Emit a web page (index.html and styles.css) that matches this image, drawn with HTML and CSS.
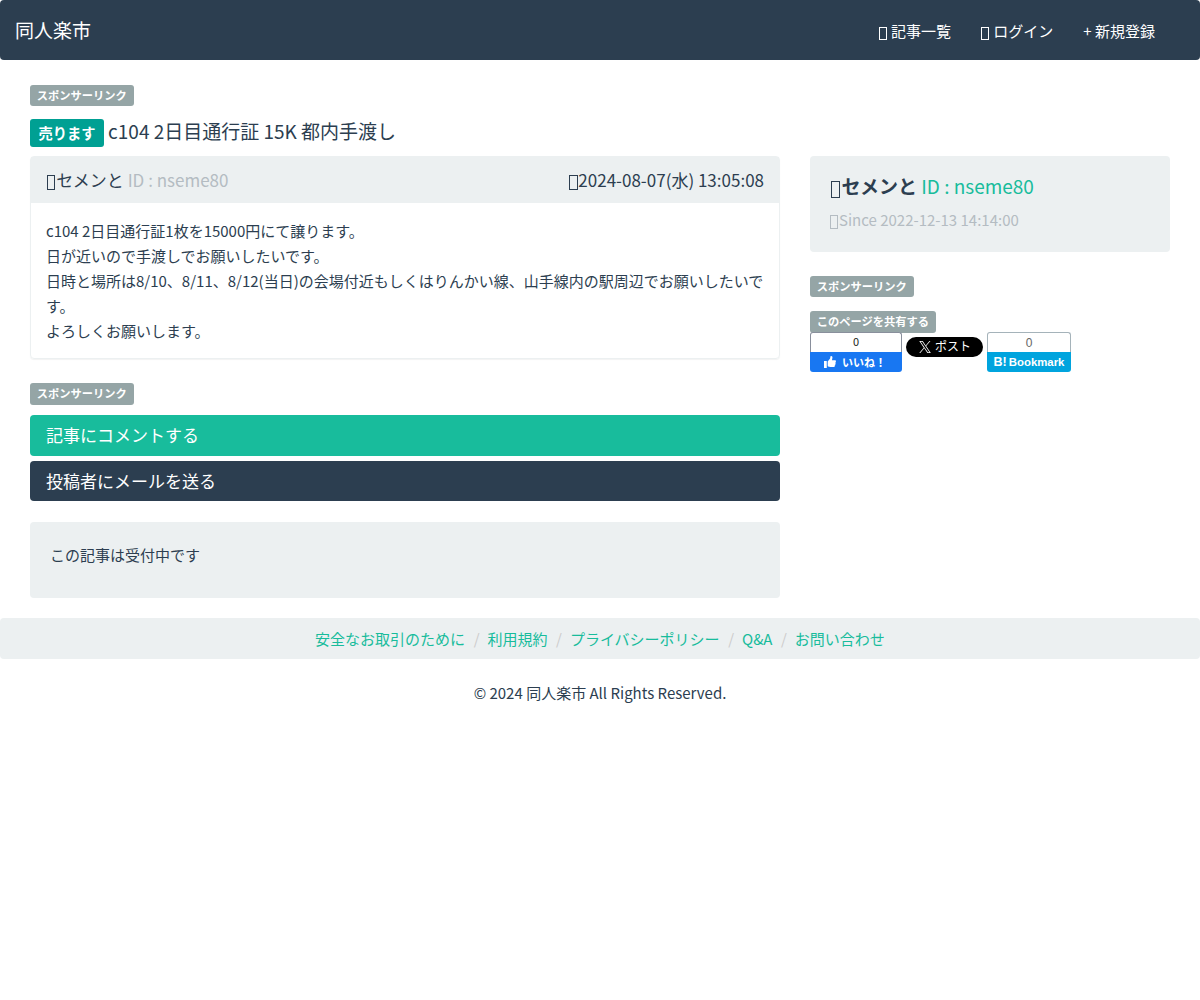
FILE: index.html
```html
<!DOCTYPE html>
<html lang="ja">
<head>
  <meta charset="UTF-8" />
  <meta name="viewport" content="width=device-width, initial-scale=1.0"/>
  <title>c104 2日目通行証 15K 都内手渡し | 同人楽市</title>
  <link rel="stylesheet" href="styles.css">
</head>
<body>
  <nav class="navbar">
    <a class="brand" href="#">同人楽市</a>
    <ul class="nav">
      <li><a href="#"><i class="icon"></i> 記事一覧</a></li>
      <li><a href="#"><i class="icon"></i> ログイン</a></li>
      <li><a href="#">+ 新規登録</a></li>
    </ul>
  </nav>

  <div class="container">
    <div class="sponsor"><span class="label">スポンサーリンク</span></div>
    <h1 class="title"><span class="label label-sell">売ります</span> <span class="title-text">c104 2日目通行証 15K 都内手渡し</span></h1>

    <div class="row">
      <main class="main">
        <div class="panel">
          <div class="panel-heading">
            <span><i class="icon"></i>セメンと <span class="muted">ID : nseme80</span></span>
            <span><i class="icon"></i>2024-08-07(水) 13:05:08</span>
          </div>
          <div class="panel-body">
            c104 2日目通行証1枚を15000円にて譲ります。<br>
            日が近いので手渡しでお願いしたいです。<br>
            日時と場所は8/10、8/11、8/12(当日)の会場付近もしくはりんかい線、山手線内の駅周辺でお願いしたいです。<br>
            よろしくお願いします。
          </div>
        </div>

        <div class="sponsor"><span class="label label-tall">スポンサーリンク</span></div>

        <a class="action action-comment" href="#">記事にコメントする</a>
        <a class="action action-mail" href="#">投稿者にメールを送る</a>

        <div class="well status">この記事は受付中です</div>
      </main>

      <aside class="side">
        <div class="well profile">
          <h2><i class="icon"></i><b>セメンと</b> <a href="#">ID : nseme80</a></h2>
          <p class="muted"><i class="icon"></i>Since 2022-12-13 14:14:00</p>
        </div>
        <div class="sponsor"><span class="label">スポンサーリンク</span></div>
        <div class="sponsor share-label"><span class="label label-tall">このページを共有する</span></div>
        <div class="share">
          <a class="counter like" href="#">
            <span class="count">0</span>
            <span class="counter-btn">
              <svg width="12" height="12" viewBox="0 0 13 13" fill="#fff"><path d="M0 5.5h3V13H0zM4 6l2.6-3.2L7 .6C7.1.1 7.5 0 7.9 0 9 .2 9.3 1.3 9.1 2.3L8.6 4.6h3.2c1.5.1 1.5 1.8.5 2.2.8.6.5 1.7-.2 1.9.5.7.2 1.5-.5 1.7.3.8-.2 1.6-1.1 1.6H7c-1.2 0-2-.4-3-.8z"/></svg>
              いいね！
            </span>
          </a>
          <a class="post" href="#">
            <svg width="12" height="12" viewBox="0 0 24 24" fill="#fff"><path d="M14.3 10.2 22.9 0h-2l-7.5 8.8L7.4 0H.5l9.1 13.3L.5 24h2l8-9.3 6.3 9.3h6.9zm-2.8 3.3-.9-1.3L3.3 1.5h3.1l6 8.6.9 1.3 7.7 11.1h-3.1z"/></svg>
            <span>ポスト</span>
          </a>
          <a class="counter hatena" href="#">
            <span class="count">0</span>
            <span class="counter-btn"><b class="mark">B!</b>Bookmark</span>
          </a>
        </div>
      </aside>
    </div>
  </div>

  <footer>
    <ul class="breadcrumb">
      <li><a href="#">安全なお取引のために</a></li>
      <li><a href="#">利用規約</a></li>
      <li><a href="#">プライバシーポリシー</a></li>
      <li><a href="#">Q&amp;A</a></li>
      <li><a href="#">お問い合わせ</a></li>
    </ul>
    <p class="copyright">© 2024 同人楽市 All Rights Reserved.</p>
  </footer>
</body>
</html>
```
FILE: styles.css
```css
* {
  box-sizing: border-box;
}

body {
  margin: 0;
  font-family: "Noto Sans CJK JP", sans-serif;
  font-size: 15px;
  line-height: 1.42857;
  color: #2c3e50;
  background: #fff;
}

a {
  color: #18bc9c;
  text-decoration: none;
}

ul {
  list-style: none;
  margin: 0;
  padding: 0;
}

/* empty glyph box */
.icon {
  display: inline-block;
  width: 0.52em;
  height: 0.92em;
  margin: 0 0.05em 0 0.03em;
  border: 1px solid currentColor;
  vertical-align: -0.21em;
}

.muted {
  color: #b4bcc2;
}

.navbar {
  display: flex;
  align-items: center;
  justify-content: space-between;
  height: 60px;
  padding: 0 45px 0 15px;
  background: #2c3e50;
  border-radius: 4px;
}

.navbar a {
  color: #fff;
}

.brand {
  font-size: 19px;
}

.nav {
  display: flex;
  gap: 30px;
  padding-top: 2px;
}

.container {
  padding: 25px 30px 0;
}

.label {
  display: inline-block;
  height: 21px;
  padding: 0 0.6em;
  font-size: 11.25px;
  font-weight: bold;
  line-height: 21px;
  color: #fff;
  background: #95a5a6;
  border-radius: 3px;
}

.label-tall {
  height: 22px;
}

.sponsor {
  display: flex;
  height: 21px;
}

.title {
  display: flex;
  align-items: flex-start;
  gap: 4px;
  height: 28px;
  margin: 13px 0 9px;
  font-size: 19px;
  font-weight: normal;
}

.title-text {
  line-height: 24px;
}

.label-sell {
  height: 28px;
  font-size: 14.25px;
  line-height: 28px;
  background: #00a093;
}

.row {
  display: flex;
  align-items: flex-start;
  gap: 30px;
}

.main {
  width: 750px;
}

.side {
  width: 360px;
}

.panel {
  margin-bottom: 24px;
  border: 1px solid #ecf0f1;
  border-radius: 4px;
  box-shadow: 0 1px 1px rgba(0, 0, 0, 0.05);
}

.panel-heading {
  display: flex;
  align-items: center;
  justify-content: space-between;
  height: 46px;
  padding: 0 15px;
  font-size: 17px;
  background: #ecf0f1;
}

.panel-body {
  padding: 15px;
  line-height: 25px;
}

.action {
  display: block;
  height: 40px;
  margin-top: 5px;
  padding: 0 16px;
  font-size: 17px;
  line-height: 40px;
  color: #fff;
  border-radius: 4px;
}

.action-comment {
  height: 41px;
  margin-top: 11px;
  background: #18bc9c;
}

.action-mail {
  background: #2c3e50;
}

.well {
  padding: 20px;
  background: #ecf0f1;
  border-radius: 4px;
}

.status {
  height: 76px;
  margin-top: 21px;
  padding: 22px 20px;
}

.profile {
  height: 96px;
  margin-bottom: 24px;
}

.profile h2 {
  margin: 0;
  font-size: 19px;
  font-weight: normal;
  line-height: 20px;
}

.profile p {
  margin: 11px 0 0;
}

.share-label {
  margin-top: 14px;
}

.share {
  display: flex;
  gap: 4px;
}

.counter {
  display: flex;
  flex-direction: column;
  height: 40px;
  font-size: 11px;
  text-align: center;
}

.count {
  height: 20px;
  line-height: 17px;
  background: #fff;
  border: 1px solid #898f9c;
  border-bottom: 0;
  border-radius: 3px 3px 0 0;
}

.counter-btn {
  display: flex;
  align-items: center;
  justify-content: center;
  height: 20px;
  font-weight: bold;
  color: #fff;
  border-radius: 0 0 3px 3px;
}

.like {
  width: 92px;
}

.like .count {
  color: #1c1e21;
}

.like .counter-btn {
  gap: 6px;
  padding-right: 2px;
  line-height: 20px;
  background: #1877f2;
}

.post {
  display: flex;
  align-items: center;
  justify-content: center;
  gap: 4px;
  width: 77px;
  height: 20px;
  margin-top: 5px;
  padding-left: 1px;
  font-size: 12px;
  line-height: 18px;
  color: #fff;
  background: #000;
  border-radius: 10px;
}

.post span {
  height: 20px;
}

.hatena {
  width: 84px;
  font-family: "Liberation Sans", Arial, sans-serif;
}

.hatena .count {
  font-size: 12px;
  line-height: 20px;
  color: #666;
  border-color: #a5b3ba;
}

.hatena .counter-btn {
  gap: 2px;
  padding-top: 1px;
  font-size: 11.4px;
  background: #00a4de;
}

.mark {
  font-size: 12.5px;
}

.breadcrumb {
  display: flex;
  justify-content: center;
  height: 41px;
  margin-top: 20px;
  line-height: 41px;
  background: #ecf0f1;
  border-radius: 4px;
}

.breadcrumb li + li::before {
  content: "/";
  padding: 0 8px 0 8.5px;
  color: #ccc;
}

.copyright {
  margin: 23px 0 0;
  text-align: center;
}
```
